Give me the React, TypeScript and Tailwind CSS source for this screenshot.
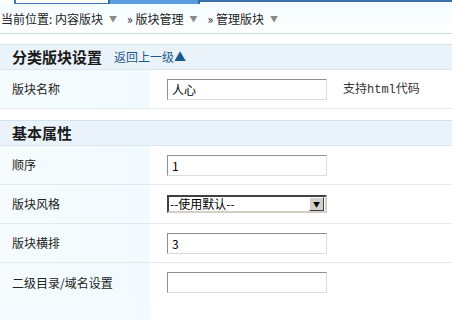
const FONT = { fontFamily: '"Noto Sans CJK SC", "Noto Sans", sans-serif' };

function Caret() {
  return <span className="ml-1.5 inline-block text-[8px] text-[#8a8a8a] align-middle">▼</span>;
}

function TextBox({ value }: { value?: string }) {
  return (
    <div className="w-[160px] h-[21px] border border-t-[#8f8f8f] border-l-[#8f8f8f] border-r-[#dcdcdc] border-b-[#dcdcdc] bg-white pl-1 text-[12px] leading-[19px] text-black">
      {value}
    </div>
  );
}

function SelectBox({ value }: { value: string }) {
  return (
    <div className="w-[160px] h-[18px] flex items-center border-2 border-t-[#404040] border-l-[#404040] border-r-[#d4d0c8] border-b-[#d4d0c8] bg-white">
      <span className="flex-1 pl-px text-[12px] leading-[14px] text-black">{value}</span>
      <span className="w-[15px] h-[14px] mr-px flex items-center justify-center bg-[#d4d0c8] border border-t-white border-l-white border-r-[#404040] border-b-[#404040] text-[7px] text-black">▼</span>
    </div>
  );
}

function SectionHead({ title, link, gap }: { title: string; link?: string; gap?: boolean }) {
  return (
    <div className={`h-[26px] flex items-center gap-3 pl-3 bg-[#eaf3fa] border-t border-b border-t-[#d3e3ee] border-b-[#dbe7f0] ${gap ? 'mt-[11px]' : ''}`}>
      <span className="text-[15px] font-bold text-[#1a1a1a]">{title}</span>
      {link && <span className="text-[12px] text-[#1d5a8c]">{link}</span>}
    </div>
  );
}

function Row({ label, children, last }: { label: string; children?: React.ReactNode; last?: boolean }) {
  return (
    <div className={`flex h-[39px] ${last ? '' : 'border-b border-[#e0eaef]'}`}>
      <div className="w-[150px] flex items-center pl-3 text-[12px] text-[#222] bg-gradient-to-r from-[#f6fcfe] to-[#f1fafd]">
        {label}
      </div>
      <div className="flex-1 flex items-center pl-[17px] gap-4 bg-white">{children}</div>
    </div>
  );
}

export default function App() {
  return (
    <div className="w-[452px] h-[320px] overflow-hidden bg-white" style={FONT}>
      {/* top tab edges */}
      <div className="flex h-[4px]">
        <div className="w-[16px] bg-white border-r-2 border-[#3d78b5]" />
        <div className="w-[92px] bg-white border-b border-[#3d78b5]" />
        <div className="w-[92px] bg-[#5b9ee0] border-x-2 border-[#2f6aa6]" />
        <div className="flex-1 bg-[#f4fbff] border-t-2 border-[#3a6fa8]" />
      </div>

      {/* breadcrumb */}
      <div className="h-[30px] flex items-center pl-px text-[12px] text-[#222] bg-gradient-to-b from-[#f3fcff] to-[#ffffff] border-b border-[#c9dbe3]">
        <span>当前位置: 内容版块</span>
        <Caret />
        <span className="ml-[10px]">» 版块管理</span>
        <Caret />
        <span className="ml-[10px]">» 管理版块</span>
        <Caret />
      </div>

      <div className="h-[10px]" />

      <SectionHead title="分类版块设置" link="返回上一级▲" />
      <Row label="版块名称">
        <TextBox value="人心" />
        <span className="text-[12px] text-[#333]">
          支持<span className="text-[12px]" style={{ fontFamily: '"Liberation Mono", monospace' }}>html</span>代码
        </span>
      </Row>

      <SectionHead title="基本属性" gap />
      <Row label="顺序">
        <TextBox value="1" />
      </Row>
      <Row label="版块风格">
        <SelectBox value="--使用默认--" />
      </Row>
      <Row label="版块横排">
        <TextBox value="3" />
      </Row>
      <Row label="二级目录/域名设置" last>
        <TextBox />
      </Row>
      <div className="flex h-[20px]">
        <div className="w-[150px] bg-[#f3fbfe]" />
      </div>
    </div>
  );
}
